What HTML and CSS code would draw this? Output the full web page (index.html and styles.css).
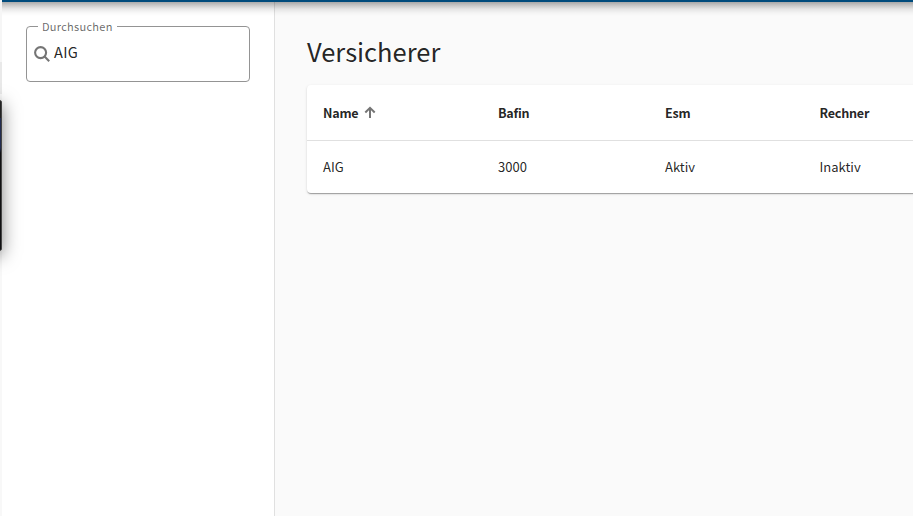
FILE: index.html
```html
<!DOCTYPE html>
<html lang="de">
<head>
<meta charset="utf-8">
<title>Versicherer</title>
<link rel="stylesheet" href="styles.css">
</head>
<body>
<div class="window">
  <header class="topbar"></header>
  <div class="layout">
    <aside class="sidebar">
      <fieldset class="search">
        <legend>Durchsuchen</legend>
        <div class="search-row">
          <svg class="search-icon" viewBox="0 0 16 16"><circle cx="6.600" cy="6.600" r="5.500"/><path d="M10.600 10.600L15.200 15.200"/></svg>
          <span>AIG</span>
        </div>
      </fieldset>
    </aside>
    <main class="content">
      <h1>Versicherer</h1>
      <table class="card">
        <colgroup><col class="c1"><col class="c2"><col class="c3"><col class="c4"></colgroup>
        <thead><tr>
          <th><span class="sorted">Name<svg class="arrow" viewBox="0 0 12 12"><path d="M6 12V2M1.300 6.500L6 1.800l4.700 4.700"/></svg></span></th>
          <th>Bafin</th><th>Esm</th><th>Rechner</th>
        </tr></thead>
        <tbody><tr><td>AIG</td><td>3000</td><td>Aktiv</td><td>Inaktiv</td></tr></tbody>
      </table>
    </main>
  </div>
</div>
<div class="backdrop-edge"></div>
<div class="overlay-window"></div>
</body>
</html>
```
FILE: styles.css
```css
* { box-sizing: border-box; }
body {
  margin: 0;
  height: 516px;
  overflow: hidden;
  position: relative;
  background: #fff;
  color: rgba(0, 0, 0, .87);
  font-family: "Noto Sans CJK JP", "Noto Sans", sans-serif;
}
.window { margin-left: 2px; height: 516px; overflow: hidden; display: flex; flex-direction: column; }
.topbar {
  height: 2px;
  flex: none;
  background: #004b7c;
  position: relative;
  z-index: 2;
}
.topbar::after {
  content: "";
  position: absolute;
  left: 0; right: 0; top: 2px;
  height: 14px;
  background: linear-gradient(rgba(0,0,0,.33), rgba(0,0,0,.22) 3px, rgba(0,0,0,.09) 7px, rgba(0,0,0,.025) 11px, transparent);
}
.layout { display: flex; flex: 1; min-height: 0; }
.sidebar { width: 273px; flex: none; background: #fff; border-right: 1px solid #e0e0e0; padding: 16px 24px; }
.search { margin: 0; height: 64px; min-width: 0; border: 1px solid #949494; border-radius: 4px; padding: 0 7px; }
.search legend {
  margin-left: 4px;
  padding: 0 4px;
  height: 17px;
  font-size: 11px;
  line-height: 17px;
  letter-spacing: .28px;
  color: rgba(0, 0, 0, .6);
}
.search-row { display: flex; align-items: center; height: 32px; gap: 4px; font-size: 14.6px; letter-spacing: .3px; }
.search-icon { width: 16px; height: 16px; margin-top: 5px; fill: none; stroke: #757575; stroke-width: 2.1; }
.content { flex: 1; min-width: 0; background: #fafafa; padding: 33px 0 0 32px; }
h1 { margin: 0; font-size: 25.5px; line-height: 32px; font-weight: 400; }
.card {
  margin-top: 18px;
  width: 680px;
  table-layout: fixed;
  border-spacing: 0;
  border-radius: 4px;
  background: #fff;
  box-shadow: 0 2px 1px -1px rgba(0,0,0,.2), 0 1px 1px rgba(0,0,0,.14), 0 1px 3px rgba(0,0,0,.12);
}
.c1 { width: 175px; }
.c2 { width: 167px; }
.c3 { width: 154.5px; }
.card th, .card td { padding: 0 0 0 16px; text-align: left; font-size: 13px; line-height: 18px; }
.card th { height: 56px; font-size: 12.6px; letter-spacing: -.24px; font-weight: 700; border-bottom: 1px solid #e0e0e0; }
.card td { height: 52px; }
.sorted { display: flex; align-items: center; }
.arrow { width: 12px; height: 12px; margin: -2px 0 0 6px; fill: none; stroke: #757575; stroke-width: 2; }
.backdrop-edge {
  position: absolute;
  left: 0; top: 0;
  width: 2px; height: 516px;
  background: linear-gradient(#f6f6f6 62px, #e9e9e9 62px, #e9e9e9 94px, #f8f8f8 94px);
}
.overlay-window {
  position: absolute;
  left: -100px; top: 100px;
  width: 102px; height: 151px;
  border-radius: 2px;
  border: 1px solid #444;
  background: linear-gradient(#222 17px, #222c50 17px, #222c50 47px, #101012 52px);
  box-shadow: 0 4px 18px rgba(0,0,0,.5);
}
```
